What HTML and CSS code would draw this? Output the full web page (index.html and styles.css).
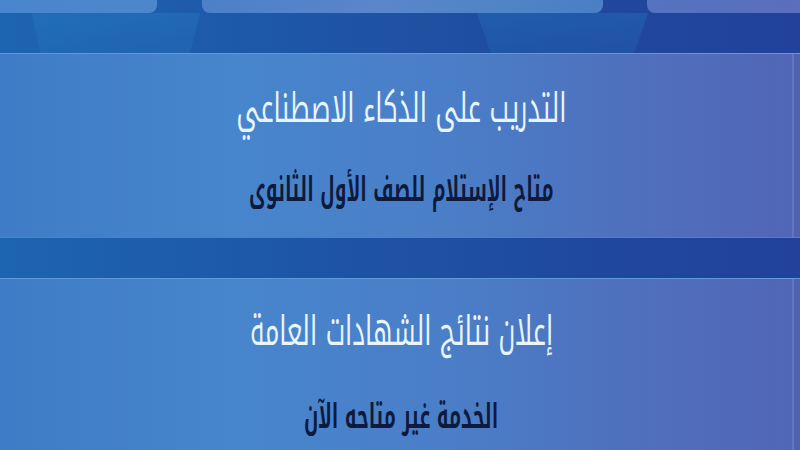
FILE: index.html
```html
<!DOCTYPE html>
<html lang="ar" dir="rtl">
<head>
<meta charset="utf-8">
<link rel="stylesheet" href="styles.css">
</head>
<body>
<div class="page">
  <div class="top-cards">
    <div class="tc tc-a"></div>
    <div class="tc tc-b"></div>
    <div class="tc tc-c"></div>
  </div>
  <div class="band band-top">
    <div class="beam beam-1"></div>
    <div class="beam beam-2"></div>
  </div>
  <section class="card">
    <h2 class="title"><span class="txt">التدريب على الذكاء الاصطناعي</span></h2>
    <p class="sub"><span class="txt">متاح الإستلام للصف الأول الثانوى</span></p>
  </section>
  <div class="band band-mid"></div>
  <section class="card card-2">
    <h2 class="title"><span class="txt">إعلان نتائج الشهادات العامة</span></h2>
    <p class="sub"><span class="txt">الخدمة غير متاحه الآن</span></p>
  </section>
</div>
</body>
</html>
```
FILE: styles.css
```css
html, body {
  margin: 0;
  padding: 0;
  width: 800px;
  height: 450px;
  overflow: hidden;
}
body {
  background: linear-gradient(90deg, #1d65b1 0%, #1e55a6 40%, #1f4a9e 70%, #22419a 100%);
  font-family: "Noto Kufi Arabic", "Noto Sans Arabic", "DejaVu Sans Condensed", "DejaVu Sans", sans-serif;
}
.page {
  display: flex;
  flex-direction: column;
  width: 800px;
  direction: ltr;
}
.top-cards {
  display: flex;
  height: 13px;
}
.tc {
  height: 13px;
  border-radius: 0 0 8px 8px;
}
.tc-a { width: 157px; background: linear-gradient(90deg, #4886cf, #4d86cc); border-radius: 0 0 8px 0; }
.tc-b { width: 401px; margin-left: 45px; background: linear-gradient(90deg, #4c80c8, #5a86cc 45%, #4f84c6 75%, #4a7fc6); }
.tc-c { width: 153px; margin-left: 44px; background: linear-gradient(90deg, #5473c0, #5a6fbe); border-radius: 0 0 0 8px; }
.band-top {
  display: flex;
  height: 40px;
}
.beam {
  height: 40px;
  background: linear-gradient(180deg, rgba(40,125,195,0.4), rgba(40,120,190,0.25));
}
.beam-1 {
  margin-left: 32px;
  width: 168px;
  clip-path: polygon(0 0, 100% 0, 94% 100%, 5% 100%);
}
.beam-2 {
  margin-left: 277px;
  width: 171px;
  clip-path: polygon(0 0, 100% 0, 92% 100%, 8% 100%);
  background: linear-gradient(180deg, rgba(35,110,185,0.45), rgba(35,105,180,0.3));
}
.card {
  width: 800px;
  height: 184px;
  box-sizing: border-box;
  border-top: 1px solid #5e9ad8;
  background:
    linear-gradient(90deg, transparent 792px, rgba(255,255,255,0.10) 792px, rgba(255,255,255,0.10) 794px, rgba(0,0,40,0.04) 794px),
    linear-gradient(90deg, #3f7cc7 0%, #4785cc 30%, #4a7fc8 55%, #4f6fbc 80%, #5166b6 100%);
  display: flex;
  flex-direction: column;
  align-items: center;
  direction: rtl;
  padding-top: 28px;
  padding-left: 3px;
}
.card-2 {
  height: 172px;
  padding-top: 26px;
}
.band-mid {
  height: 41px;
  border-top: 1px solid #4d80c4;
  box-sizing: border-box;
}
.txt {
  display: inline-block;
  white-space: nowrap;
}
.title {
  margin: 0;
  font-weight: normal;
  font-size: 41px;
  line-height: 52px;
  color: #e8f5fb;
}
.title .txt { transform: scaleX(0.61); }
.sub {
  margin: 36px 0 0;
  font-weight: bold;
  font-size: 34px;
  line-height: 40px;
  color: #0e1a3c;
}
.sub .txt { transform: scaleX(0.555); }
.card-2 .sub { margin-top: 40px; }
```
